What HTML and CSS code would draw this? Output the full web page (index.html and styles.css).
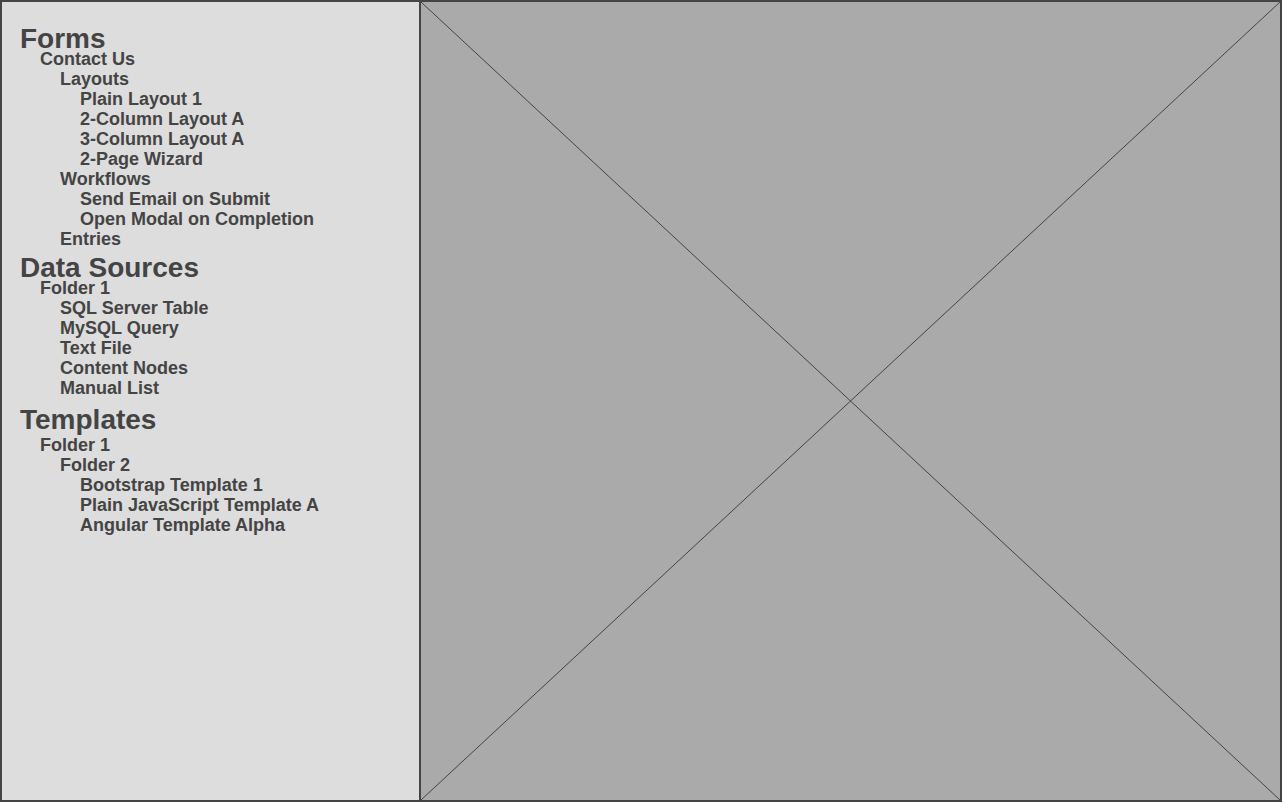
FILE: index.html
```html
<!DOCTYPE html>
<html lang="en">
<head>
<meta charset="utf-8">
<title>Tree</title>
<link rel="stylesheet" href="styles.css">
</head>
<body>
<div class="frame">
  <nav class="sidebar">
    <section class="section">
      <h2 class="heading">Forms</h2>
      <ul class="tree">
        <li class="lvl1">Contact Us</li>
        <li class="lvl2">Layouts</li>
        <li class="lvl3">Plain Layout 1</li>
        <li class="lvl3">2-Column Layout A</li>
        <li class="lvl3">3-Column Layout A</li>
        <li class="lvl3">2-Page Wizard</li>
        <li class="lvl2">Workflows</li>
        <li class="lvl3">Send Email on Submit</li>
        <li class="lvl3">Open Modal on Completion</li>
        <li class="lvl2">Entries</li>
      </ul>
    </section>
    <section class="section">
      <h2 class="heading">Data Sources</h2>
      <ul class="tree">
        <li class="lvl1">Folder 1</li>
        <li class="lvl2">SQL Server Table</li>
        <li class="lvl2">MySQL Query</li>
        <li class="lvl2">Text File</li>
        <li class="lvl2">Content Nodes</li>
        <li class="lvl2">Manual List</li>
      </ul>
    </section>
    <section class="section section-wide">
      <h2 class="heading">Templates</h2>
      <ul class="tree">
        <li class="lvl1">Folder 1</li>
        <li class="lvl2">Folder 2</li>
        <li class="lvl3">Bootstrap Template 1</li>
        <li class="lvl3">Plain JavaScript Template A</li>
        <li class="lvl3">Angular Template Alpha</li>
      </ul>
    </section>
  </nav>
  <main class="canvas">
    <svg class="placeholder" viewBox="0 0 100 100" preserveAspectRatio="none">
      <line x1="0" y1="0" x2="100" y2="100" />
      <line x1="100" y1="0" x2="0" y2="100" />
    </svg>
  </main>
</div>
</body>
</html>
```
FILE: styles.css
```css
html, body {
  margin: 0;
  padding: 0;
  background: #ffffff;
}

.frame {
  box-sizing: border-box;
  width: 1282px;
  height: 802px;
  border: 2px solid #444444;
  display: flex;
}

.sidebar {
  box-sizing: border-box;
  width: 419px;
  flex: 0 0 419px;
  background: #dddddd;
  border-right: 2px solid #444444;
  padding: 26px 0 0 18px;
  font-family: "Liberation Sans", Arial, sans-serif;
  font-weight: bold;
  color: #444444;
}

.section + .section {
  margin-top: 8px;
}

.section + .section-wide {
  margin-top: 11px;
}

.section-wide .heading {
  margin-bottom: 5px;
}

.heading {
  margin: 0;
  font-size: 28px;
  line-height: 21px;
  font-weight: bold;
}

.tree {
  list-style: none;
  margin: 0;
  padding: 0;
  font-size: 18px;
  line-height: 20px;
}

.lvl1 { padding-left: 20px; }
.lvl2 { padding-left: 40px; }
.lvl3 { padding-left: 60px; }

.canvas {
  flex: 1;
  background: #aaaaaa;
  position: relative;
}

.placeholder {
  display: block;
  width: 100%;
  height: 100%;
}

.placeholder line {
  stroke: #444444;
  stroke-width: 1;
  vector-effect: non-scaling-stroke;
}
```
